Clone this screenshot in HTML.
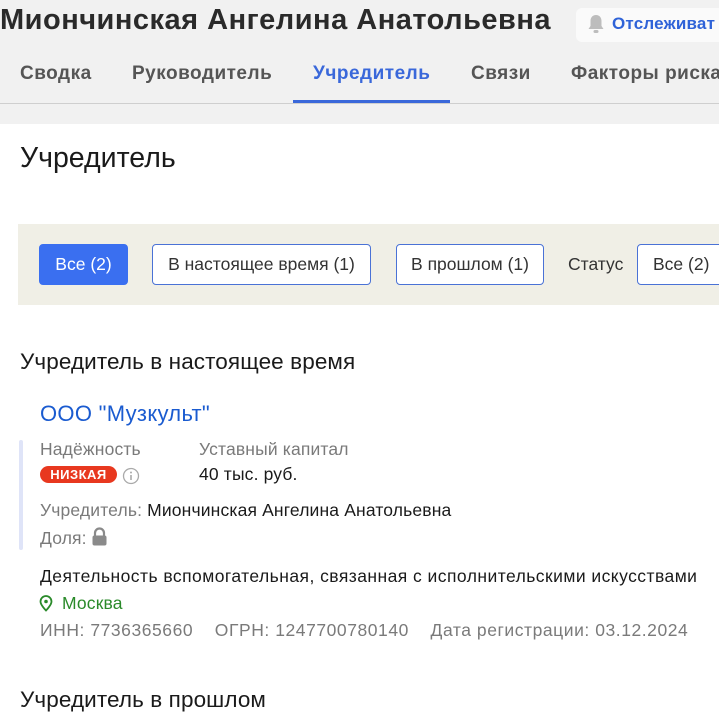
<!DOCTYPE html>
<html><head><meta charset="utf-8"><style>
*{margin:0;padding:0;box-sizing:border-box}
body{width:719px;height:724px;overflow:hidden;background:#fff;font-family:"Liberation Sans",sans-serif;position:relative;color:#222}
.a{position:absolute;white-space:nowrap}
.top{position:absolute;left:0;top:0;width:719px;height:124px;background:#f1f1f1}
.tab{position:absolute;top:63px;font-size:19px;font-weight:bold;color:#555;letter-spacing:0.5px;white-space:nowrap}
.btn{position:absolute;top:244px;height:41px;border:1px solid #4a72d6;border-radius:4px;background:#fff;font-size:17.5px;color:#333;line-height:39px;text-align:center;white-space:nowrap}
.lbl{color:#7a7a7a}
.t{font-size:17.5px;letter-spacing:0.15px}
</style></head><body>
<div class="top"></div>
<div class="a" style="left:0;top:4px;font-size:29px;font-weight:bold;color:#2a2a2a;letter-spacing:0.5px">Миончинская Ангелина Анатольевна</div>
<div class="a" style="left:576px;top:8px;width:160px;height:34px;background:#fafafa;border-radius:6px"></div>
<svg class="a" style="left:587px;top:14px" width="18" height="20" viewBox="0 0 18 20"><path d="M9 1c-3.5 0-5.5 2.6-5.5 6v5L1.5 15h15l-2-3V7C14.5 3.6 12.5 1 9 1z" fill="#bdbdbd"/><rect x="6.5" y="16" width="5" height="3" rx="1.5" fill="#bdbdbd"/></svg>
<div class="a" style="left:612px;top:14px;font-size:17px;font-weight:bold;color:#2f63d8;letter-spacing:0.2px">Отслеживат</div>
<div class="tab" style="left:20px">Сводка</div>
<div class="tab" style="left:132px">Руководитель</div>
<div class="tab" style="left:313px;color:#3a68da">Учредитель</div>
<div class="tab" style="left:471px">Связи</div>
<div class="tab" style="left:571px">Факторы риска</div>
<div class="a" style="left:0;top:103px;width:719px;height:1px;background:#cfcfcf"></div>
<div class="a" style="left:293px;top:100px;width:157px;height:3px;background:#3a68da"></div>

<div class="a" style="left:20px;top:142px;font-size:28.5px;color:#1a1a1a">Учредитель</div>
<div class="a" style="left:18px;top:224px;width:701px;height:81px;background:#f0efe6"></div>
<div class="btn" style="left:39px;width:89px;background:#3a6ff0;border-color:#3a6ff0;color:#fff">Все (2)</div>
<div class="btn" style="left:152px;width:219px">В настоящее время (1)</div>
<div class="btn" style="left:396px;width:148px">В прошлом (1)</div>
<div class="a" style="left:568px;top:254px;font-size:17.5px;color:#333">Статус</div>
<div class="btn" style="left:637px;width:100px;text-align:left;padding-left:15px">Все (2)</div>

<div class="a" style="left:20px;top:349px;font-size:22.5px;color:#1a1a1a;letter-spacing:0.1px">Учредитель в настоящее время</div>
<div class="a" style="left:40px;top:401px;font-size:22px;color:#1a5bd0;letter-spacing:0.3px">ООО "Музкульт"</div>
<div class="a" style="left:19px;top:440px;width:4px;height:110px;background:#dfe4f8;border-radius:2px"></div>
<div class="a lbl t" style="left:40px;top:439px">Надёжность</div>
<div class="a lbl t" style="left:199px;top:439px">Уставный капитал</div>
<div class="a" style="left:40px;top:466px;width:77px;height:17px;background:#e8381f;border-radius:9px;color:#fff;font-weight:bold;font-size:13px;line-height:17px;text-align:center;letter-spacing:0.5px">НИЗКАЯ</div>
<svg class="a" style="left:122px;top:467px" width="18" height="18" viewBox="0 0 18 18"><circle cx="9" cy="9" r="7.5" fill="none" stroke="#aaa" stroke-width="1.3"/><circle cx="9" cy="5.5" r="1" fill="#aaa"/><path d="M9 8v5" stroke="#aaa" stroke-width="1.6"/></svg>
<div class="a t" style="left:199px;top:464px;color:#1a1a1a">40 тыс. руб.</div>
<div class="a t" style="left:40px;top:500px;color:#1a1a1a"><span class="lbl">Учредитель:</span> Миончинская Ангелина Анатольевна</div>
<div class="a lbl t" style="left:40px;top:528px">Доля:</div>
<svg class="a" style="left:91px;top:527px" width="17" height="20" viewBox="0 0 17 20"><path d="M4 9V6a4.5 4.5 0 0 1 9 0v3" fill="none" stroke="#8a8a8a" stroke-width="2.2"/><rect x="1.5" y="8.5" width="14" height="10" rx="2" fill="#8a8a8a"/></svg>
<div class="a t" style="left:40px;top:566px;color:#1a1a1a;letter-spacing:0.45px">Деятельность вспомогательная, связанная с исполнительскими искусствами</div>
<svg class="a" style="left:39px;top:595px" width="14" height="17" viewBox="0 0 14 17"><path d="M7 15.5S1.5 10 1.5 6.5a5.5 5.5 0 0 1 11 0C12.5 10 7 15.5 7 15.5z" fill="none" stroke="#2a8a2a" stroke-width="1.8"/><circle cx="7" cy="6.5" r="1.8" fill="#2a8a2a"/></svg>
<div class="a t" style="left:62px;top:593px;color:#2a8a2a">Москва</div>
<div class="a lbl t" style="left:40px;top:620px;letter-spacing:0.55px">ИНН: 7736365660 &nbsp;&nbsp; ОГРН: 1247700780140 &nbsp;&nbsp; Дата регистрации: 03.12.2024</div>
<div class="a" style="left:20px;top:687px;font-size:22.5px;color:#1a1a1a;letter-spacing:0.1px">Учредитель в прошлом</div>
</body></html>
